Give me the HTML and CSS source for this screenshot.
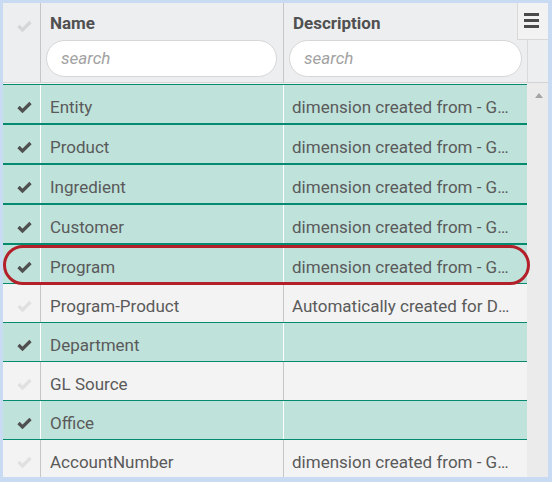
FILE: index.html
```html
<!DOCTYPE html>
<html>
<head>
<meta charset="utf-8">
<link rel="stylesheet" href="styles.css">
</head>
<body>
<div class="frame">
  <div class="grid">
    <div class="main">
      <div class="header">
        <div class="hcell hcheck">
          <svg class="chk" viewBox="0 0 15 12"><polyline points="1.5,6 5.5,10 13.5,2"/></svg>
        </div>
        <div class="hcell hname">
          <div class="htitle">Name</div>
          <div class="search">search</div>
        </div>
        <div class="hcell hdesc">
          <div class="htitle">Description</div>
          <div class="search">search</div>
        </div>
      </div>
      <div class="body">
        <div class="row sel"><div class="c cc"><svg class="chk" viewBox="0 0 15 12"><polyline points="1.5,6 5.5,10 13.5,2"/></svg></div><div class="c cn">Entity</div><div class="c cd">dimension created from - GL Source</div></div>
        <div class="row sel"><div class="c cc"><svg class="chk" viewBox="0 0 15 12"><polyline points="1.5,6 5.5,10 13.5,2"/></svg></div><div class="c cn">Product</div><div class="c cd">dimension created from - GL Source</div></div>
        <div class="row sel"><div class="c cc"><svg class="chk" viewBox="0 0 15 12"><polyline points="1.5,6 5.5,10 13.5,2"/></svg></div><div class="c cn">Ingredient</div><div class="c cd">dimension created from - GL Source</div></div>
        <div class="row sel"><div class="c cc"><svg class="chk" viewBox="0 0 15 12"><polyline points="1.5,6 5.5,10 13.5,2"/></svg></div><div class="c cn">Customer</div><div class="c cd">dimension created from - GL Source</div></div>
        <div class="row sel"><div class="c cc"><svg class="chk" viewBox="0 0 15 12"><polyline points="1.5,6 5.5,10 13.5,2"/></svg></div><div class="c cn">Program</div><div class="c cd">dimension created from - GL Source</div></div>
        <div class="row"><div class="c cc"><svg class="chk" viewBox="0 0 15 12"><polyline points="1.5,6 5.5,10 13.5,2"/></svg></div><div class="c cn">Program-Product</div><div class="c cd">Automatically created for Data Cubes</div></div>
        <div class="row sel"><div class="c cc"><svg class="chk" viewBox="0 0 15 12"><polyline points="1.5,6 5.5,10 13.5,2"/></svg></div><div class="c cn">Department</div><div class="c cd"></div></div>
        <div class="row"><div class="c cc"><svg class="chk" viewBox="0 0 15 12"><polyline points="1.5,6 5.5,10 13.5,2"/></svg></div><div class="c cn">GL Source</div><div class="c cd"></div></div>
        <div class="row sel"><div class="c cc"><svg class="chk" viewBox="0 0 15 12"><polyline points="1.5,6 5.5,10 13.5,2"/></svg></div><div class="c cn">Office</div><div class="c cd"></div></div>
        <div class="row"><div class="c cc"><svg class="chk" viewBox="0 0 15 12"><polyline points="1.5,6 5.5,10 13.5,2"/></svg></div><div class="c cn">AccountNumber</div><div class="c cd">dimension created from - GL Source</div></div>
      </div>
    </div>
    <div class="scroll">
      <div class="scroll-head"></div>
      <div class="scroll-track"><div class="arrow"></div></div>
    </div>
    <div class="menu-btn"><span></span><span></span><span></span></div>
    <div class="highlight"></div>
  </div>
</div>
</body>
</html>
```
FILE: styles.css
```css
html, body {
  margin: 0;
  padding: 0;
}
body {
  font-family: Roboto, "Liberation Sans", Arial, sans-serif;
  background: #c8dbf2;
}
.frame {
  width: 552px;
  height: 482px;
  box-sizing: border-box;
  padding: 3px 4px 5px 3px;
  background: #c8dbf2;
}
.grid {
  position: relative;
  display: flex;
  height: 100%;
  overflow: hidden;
  background: #f3f3f3;
}
.main {
  width: 524px;
  display: flex;
  flex-direction: column;
}
.header {
  display: flex;
  height: 79px;
  border-bottom: 1px solid #d3d3d3;
  background: #eceeef;
  flex-shrink: 0;
}
.hcell {
  box-sizing: border-box;
  height: 79px;
}
.hcheck {
  width: 38px;
  border-right: 1px solid #c6c6c6;
  padding: 17px 0 0 14px;
}
.hcheck .chk polyline {
  stroke: #d4d6d7;
}
.hname {
  width: 243px;
  border-right: 1px solid #c6c6c6;
  padding: 10px 6px 0 5px;
}
.hdesc {
  width: 243px;
  padding: 10px 5px 0 5px;
}
.htitle {
  font-size: 17px;
  font-weight: 700;
  line-height: 20px;
  color: #505050;
  padding-left: 4px;
  margin-bottom: 7px;
}
.search {
  height: 37px;
  box-sizing: border-box;
  border: 1px solid #d6d6d6;
  border-radius: 19px;
  background: #fff;
  font-size: 17px;
  font-style: italic;
  color: #a2a2a2;
  line-height: 35px;
  padding-left: 14px;
}
.body {
  padding-top: 1px;
}
.row {
  display: flex;
  height: 38px;
  background: #f3f3f3;
}
.row.sel {
  background: #bfe2da;
  border-top: 1px solid #05896f;
  border-bottom: 1px solid #05896f;
}
.c {
  box-sizing: border-box;
  height: 38px;
  font-size: 17px;
  line-height: 20px;
  color: #5a5a5a;
  padding-top: 12px;
  white-space: nowrap;
  overflow: hidden;
  text-overflow: ellipsis;
}
.cc {
  width: 38px;
  border-right: 1px solid #c6c6c6;
  padding: 16px 0 0 14px;
}
.cn {
  width: 243px;
  border-right: 1px solid #c6c6c6;
  padding-left: 9px;
}
.cd {
  width: 243px;
  padding-left: 8px;
  padding-right: 12px;
}
.row.sel .cc, .row.sel .cn {
  border-right-color: #ffffff;
}
.chk {
  display: block;
  width: 15px;
  height: 12px;
}
.chk polyline {
  fill: none;
  stroke: #e0e0e0;
  stroke-width: 3.2;
}
.row.sel .chk polyline {
  stroke: #505050;
}
.scroll {
  width: 21px;
  display: flex;
  flex-direction: column;
}
.scroll-head {
  flex-shrink: 0;
  box-sizing: border-box;
  border-left: 1px solid #dadada;
  border-bottom: 1px solid #d3d3d3;
  background: #eceeef;
  height: 80px;
}
.scroll-track {
  flex: 1;
  background: #ebebeb;
  padding-top: 10px;
}
.arrow {
  width: 0;
  height: 0;
  margin-left: 8px;
  border-left: 4px solid transparent;
  border-right: 4px solid transparent;
  border-bottom: 5px solid #a4a4a4;
}
.menu-btn {
  position: absolute;
  top: 0;
  right: 0;
  width: 31px;
  height: 37px;
  box-sizing: border-box;
  background: #f2f2f2;
  border-left: 1px solid #d8d8d8;
  border-bottom: 1px solid #d8d8d8;
  display: flex;
  flex-direction: column;
  gap: 3px;
  padding: 10px 0 0 6px;
}
.menu-btn span {
  display: block;
  width: 15px;
  height: 3px;
  background: #4a4a4a;
}
.highlight {
  position: absolute;
  left: 0;
  top: 242px;
  width: 527px;
  height: 40px;
  box-sizing: border-box;
  border: 3px solid #b3202a;
  border-radius: 21px;
  pointer-events: none;
}
```
